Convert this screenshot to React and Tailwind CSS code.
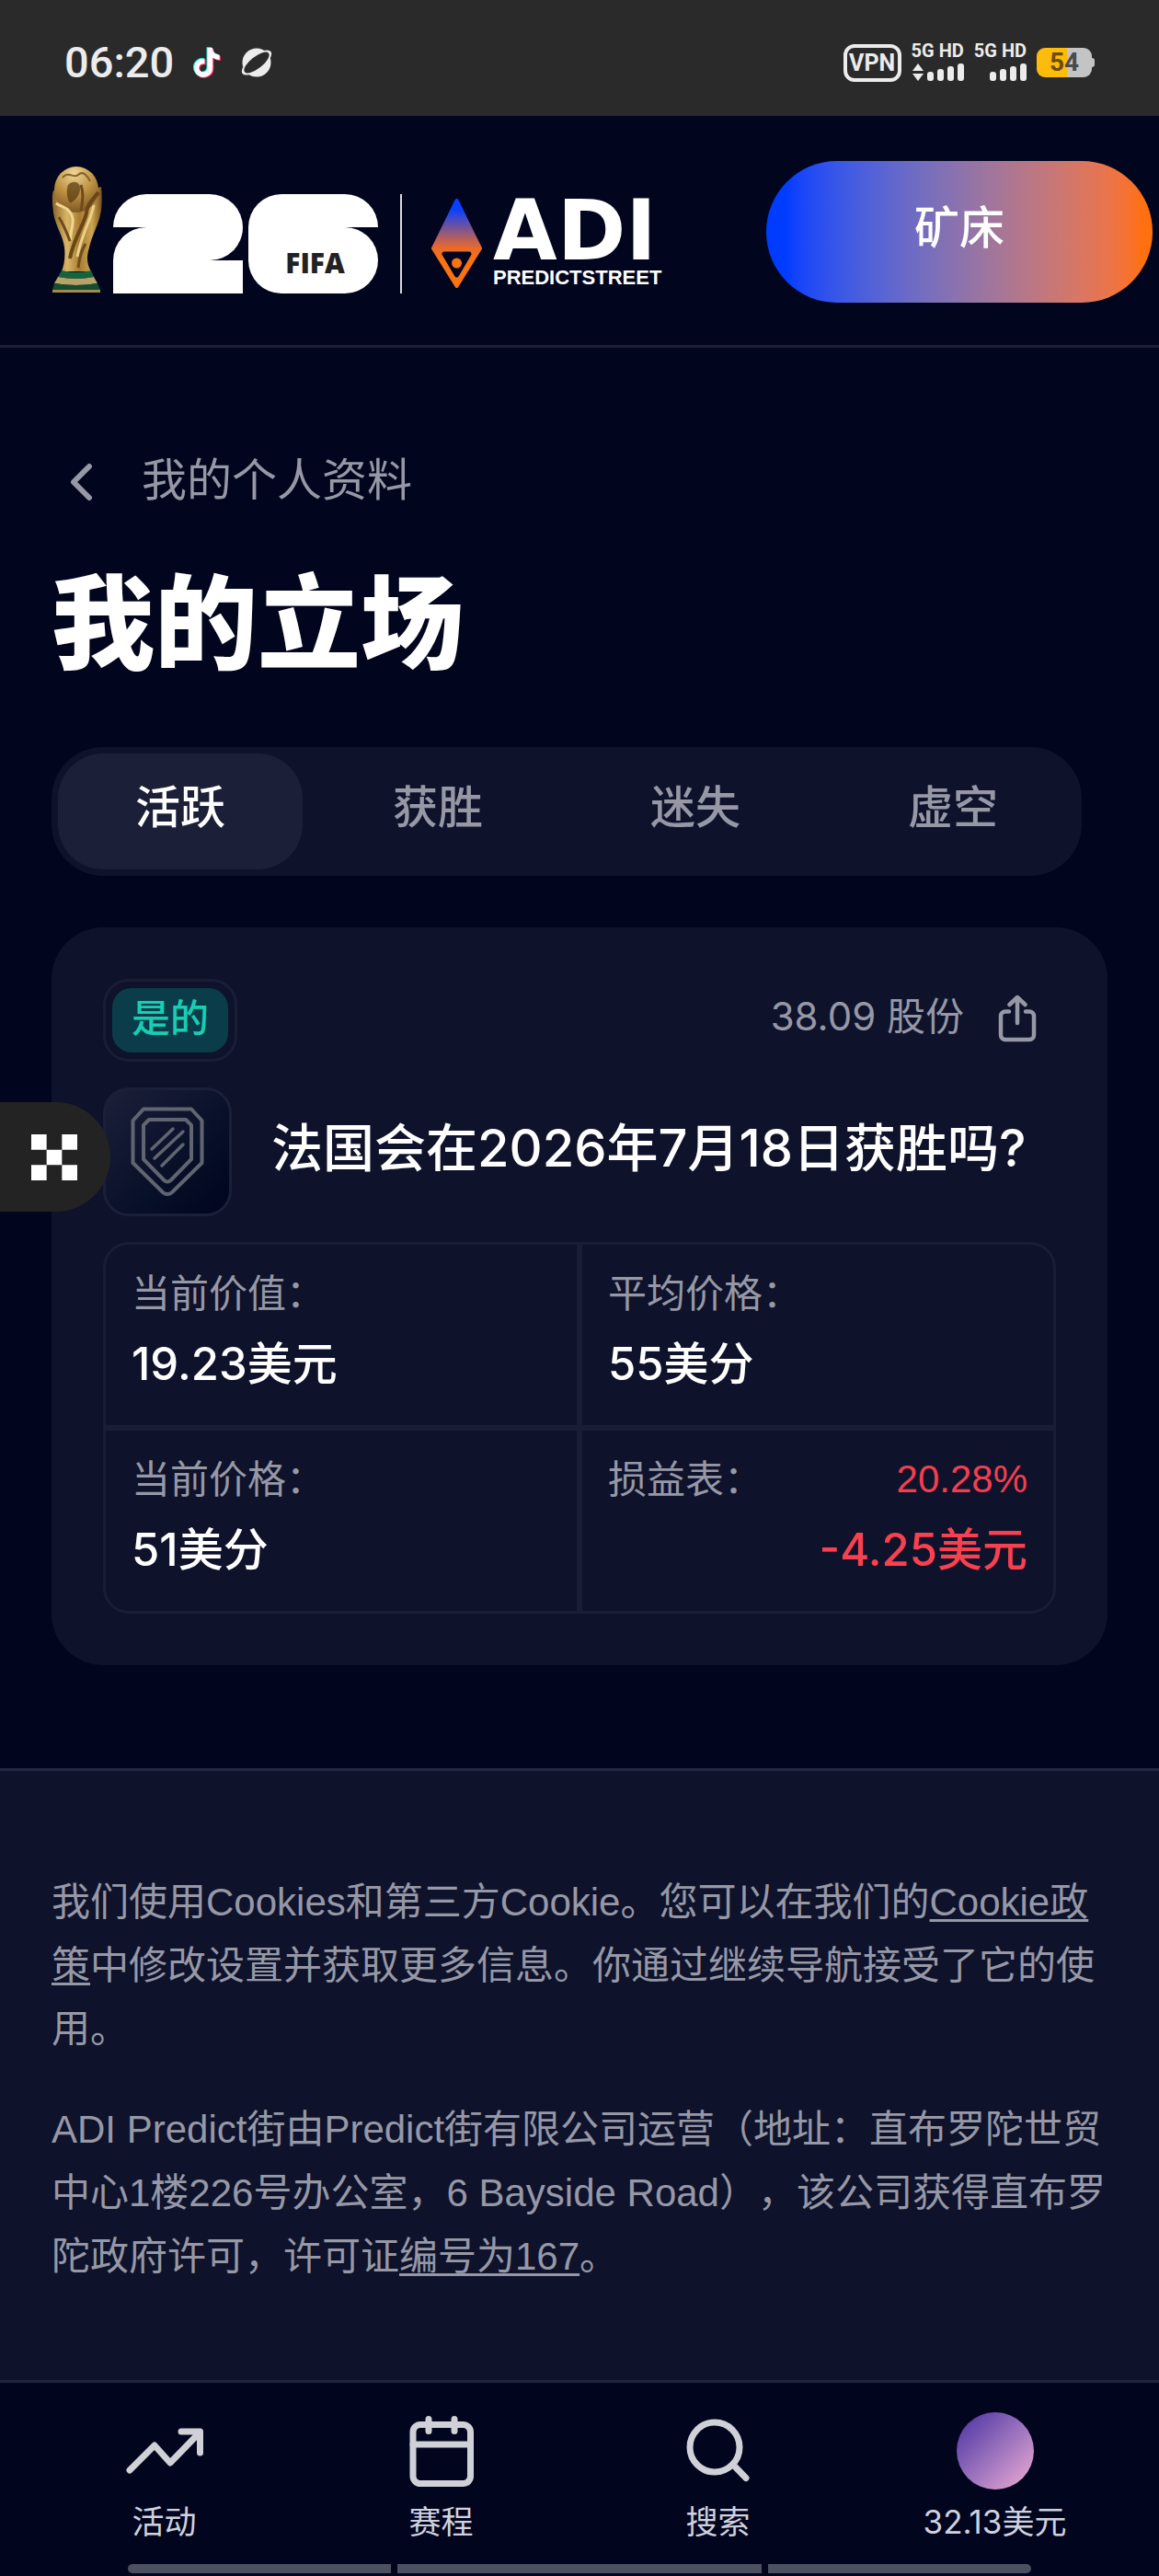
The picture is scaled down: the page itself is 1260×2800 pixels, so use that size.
import { useState } from "react";

const TABS = ["活跃", "获胜", "迷失", "虚空"];

const BAR_HEIGHTS = ["h-[10px]", "h-[13px]", "h-[16px]", "h-[19px]"];

// ---------- Icons ----------

function TiktokIcon() {
  const note = "M19.6 6.7a4.8 4.8 0 0 1-3.8-4.2V2h-3.4v13.7a2.9 2.9 0 1 1-2-2.8V9.4a6.3 6.3 0 1 0 5.5 6.3v-7a8.2 8.2 0 0 0 4.700 1.500V6.800a4.800 4.800 0 0 1-1-.1z";
  return (
    <svg viewBox="2 1 20 22" className="h-9 w-8" aria-hidden="true">
      <path d={note} fill="#25f4ee" transform="translate(-0.7 -0.5)" />
      <path d={note} fill="#fe2c55" transform="translate(0.7 0.6)" />
      <path d={note} fill="#ffffff" />
    </svg>
  );
}

function PlanetIcon() {
  return (
    <svg viewBox="0 0 36 34" className="h-[34px] w-9" aria-hidden="true">
      <circle cx="18" cy="17" r="15.5" fill="#ececec" />
      <ellipse cx="18" cy="17" rx="19.5" ry="8" transform="rotate(-38 18 17)" fill="#ececec" />
      <ellipse cx="18" cy="17" rx="16.5" ry="6.5" transform="rotate(-38 18 17)" fill="#2a2a2a" />
    </svg>
  );
}

function Trophy() {
  return (
    <svg viewBox="0 0 56 138" className="h-[138px] w-14" role="img" aria-label="Trophy">
      <defs>
        <linearGradient id="gold" x1="0" x2="1" y1="0" y2="0">
          <stop offset="0" stopColor="#8a6428" />
          <stop offset="0.3" stopColor="#d9b768" />
          <stop offset="0.55" stopColor="#a87c33" />
          <stop offset="0.8" stopColor="#cda553" />
          <stop offset="1" stopColor="#76501c" />
        </linearGradient>
        <radialGradient id="globe" cx="0.45" cy="0.15" r="0.9">
          <stop offset="0" stopColor="#efd795" />
          <stop offset="0.5" stopColor="#bd9244" />
          <stop offset="1" stopColor="#76501f" />
        </radialGradient>
      </defs>
      <path d="M2 26C0 32 1 40 2 50C4 64 12 74 14 88C15 98 14 106 11 114H43C38 106 38 98 41 88C44 74 52 62 54 48C55 38 55 30 54 22L46 24L10 28Z" fill="url(#gold)" />
      <ellipse cx="27" cy="25" rx="24" ry="25" fill="url(#globe)" />
      <path d="M12 12c7-8 12 2 17-3s10 1 13 7" fill="none" stroke="#8a6228" strokeWidth="2" />
      <path d="M18 20c6-6 13-3 13 4s-5 12-9 15-7-12-4-19z" fill="#54370f" opacity="0.7" />
      <path d="M5 40c6 4 13 4 17 13s-3 18-1 27" fill="none" stroke="#f0d68f" strokeWidth="3" />
      <path d="M51 28c-5 7-12 12-13 22s-14 28-18 50" fill="none" stroke="#6a4617" strokeWidth="4" />
      <path d="M46 42c-3 16-13 30-18 56" fill="none" stroke="#ecd08a" strokeWidth="3" />
      <path d="M8 55c5 8 8 15 12 26M32 20c3 9 2 17 0 28M37 84c-5 8-7 17-8 26" fill="none" stroke="#704a1a" strokeWidth="3" />
      <path d="M11 113Q27 117 43 113L46 120Q27 124 7 120Z" fill="#17633d" />
      <path d="M7 120Q27 124 46 120L50 127Q27 131 3 127Z" fill="#b9a16a" />
      <path d="M3 127Q27 131 50 127L53 134Q27 138 1 134Z" fill="#124f31" />
      <path d="M1 134H53V137H1Z" fill="#a8884a" />
    </svg>
  );
}

function AdiDiamond() {
  return (
    <svg viewBox="0 0 55 97" className="h-[97px] w-[55px]" aria-hidden="true">
      <defs>
        <linearGradient id="diamond" x1="0" x2="0" y1="0" y2="1">
          <stop offset="0.1" stopColor="#0a3fff" />
          <stop offset="0.55" stopColor="#e8692c" />
          <stop offset="0.7" stopColor="#fb7210" />
        </linearGradient>
      </defs>
      <path d="M27.5 2L53 54L27.5 95L2 54Z" fill="url(#diamond)" stroke="url(#diamond)" strokeWidth="4" strokeLinejoin="round" />
      <path d="M14 60H41L27.5 83Z" fill="#01051e" stroke="#01051e" strokeWidth="5" strokeLinejoin="round" />
      <circle cx="27.5" cy="70" r="5.5" fill="#fb7210" />
    </svg>
  );
}

function ShareIcon() {
  return (
    <svg viewBox="0 0 42 52" className="h-[52px] w-[42px]" fill="none" stroke="currentColor" strokeWidth="4.5" strokeLinecap="round" strokeLinejoin="round" aria-hidden="true">
      <path d="M12 18.5H8a5 5 0 0 0-5 5V44a5 5 0 0 0 5 5H34a5 5 0 0 0 5-5V23.5a5 5 0 0 0-5-5H30" />
      <path d="M21 31V3.5M12.5 11L21 3L29.5 11" />
    </svg>
  );
}

function ShieldIcon() {
  return (
    <svg viewBox="0 0 80 98" className="h-[98px] w-20" fill="none" stroke="#61656f" strokeWidth="4" strokeLinejoin="round" strokeLinecap="round" aria-hidden="true">
      <path d="M14 2.5H66L77.5 15V61L45 93Q40 97 35 93L2.5 61V15Z" />
      <path d="M20 14H60L66 20V57L43.5 80Q40 83 36.5 80L14 57V20Z" />
      <path d="M23 46L46 24M26 56L57 27M34 64L57 41" strokeWidth="3.5" />
    </svg>
  );
}

function NavSvg({ children }) {
  return (
    <svg viewBox="0 0 84 84" className="size-21" fill="none" stroke="#cfd1d6" strokeWidth="7" strokeLinecap="round" strokeLinejoin="round" aria-hidden="true">
      {children}
    </svg>
  );
}

// ---------- Status bar ----------

function Signal({ arrows }) {
  return (
    <div className="flex flex-col items-end gap-[6px]">
      <span className="text-[20px] leading-[15px] font-bold whitespace-nowrap">5G HD</span>
      <div className="flex h-[19px] items-end gap-[4px]">
        {arrows && (
          <svg viewBox="0 0 12 19" className="h-[19px] w-[12px]" fill="currentColor" aria-hidden="true">
            <path d="M6 0L12 8H0ZM6 19L0 11H12Z" />
          </svg>
        )}
        {BAR_HEIGHTS.map((h) => (
          <span key={h} className={`w-[7px] rounded-[3px] bg-[#ececec] ${h}`} />
        ))}
      </div>
    </div>
  );
}

function StatusBar() {
  return (
    <div className="flex h-[126px] items-center justify-between bg-[#2a2a2a] pt-[10px] pr-[70px] pl-[70px] font-[Roboto,sans-serif] text-[#ececec]">
      <div className="flex items-center gap-5">
        <span className="text-[47px] leading-[46px] font-medium">06:20</span>
        <TiktokIcon />
        <PlanetIcon />
      </div>
      <div className="flex items-center gap-[11px]">
        <span className="flex h-[41px] w-[63px] items-center justify-center rounded-[12px] border-4 border-[#ececec] text-[25px] leading-none font-bold">
          VPN
        </span>
        <Signal arrows />
        <Signal />
        <div className="flex items-center">
          <span className="flex h-8 w-[60px] items-center justify-center rounded-[9px] bg-linear-to-r from-[#fdbb0b] from-55% to-[#c4c4c4] to-55% text-[28px] leading-none font-bold">
            <span className="text-[#6d4a06]">5</span>
            <span className="text-[#4b4b4b]">4</span>
          </span>
          <span className="h-[10px] w-[3px] rounded-r-sm bg-[#c4c4c4]" />
        </div>
      </div>
    </div>
  );
}

// ---------- Header ----------

function Emblem26() {
  return (
    <div className="flex gap-[6px]">
      <div className="w-[141px]">
        <div className="h-9 rounded-t-[36px] bg-white" />
        <div className="h-9 rounded-tl-[36px] rounded-br-[36px] bg-white" />
        <div className="h-9 bg-white" />
      </div>
      <div className="w-[141px]">
        <div className="h-9 rounded-t-[36px] bg-white" />
        <div className="flex h-18 items-center justify-center rounded-tr-[36px] rounded-b-[36px] bg-white pt-1 pl-1 font-['Open_Sans',sans-serif] text-[30px] font-extrabold text-[#222222]">
          FIFA
        </div>
      </div>
    </div>
  );
}

function Header() {
  return (
    <header className="flex items-start justify-between border-b-3 border-[#1b2039] pt-[49px] pr-[7px] pb-[46px] pl-14">
      <a href="#home" className="mt-[6px] flex items-end">
        <Trophy />
        <div className="ml-[11px]">
          <Emblem26 />
        </div>
        <span className="ml-6 h-27 w-[2px] bg-[#d8d9de]" />
        <span className="ml-8 flex items-center gap-3 pb-[6px]">
          <AdiDiamond />
          <span className="flex flex-col gap-3">
            <span className="font-['DejaVu_Sans',sans-serif] text-[90px] leading-[62px] font-bold">ADI</span>
            <span className="font-['Liberation_Sans',sans-serif] text-[22px] leading-4 font-bold">PREDICTSTREET</span>
          </span>
        </span>
      </a>
      <button className="h-[154px] w-[420px] rounded-full bg-linear-to-r from-[#003cff] from-5% to-[#ff7010] to-97% pb-2 text-[49px] leading-[56px] font-medium">
        矿床
      </button>
    </header>
  );
}

// ---------- Position card ----------

function Stat({ label, value, change, corner }) {
  return (
    <div className={`border-3 border-[#191d36] px-7 pt-7 pb-[38px] ${corner}`}>
      <dt className="flex justify-between text-[42px] leading-[50px] text-[#9698a6]">
        {label}
        {change && <span className="font-['Liberation_Sans',sans-serif] text-[#f23f50]">{change}</span>}
      </dt>
      <dd className={`mt-6 text-[49px] leading-[56px] font-medium ${change ? "text-right text-[#f8404f]" : ""}`}>{value}</dd>
    </div>
  );
}

function PositionCard() {
  return (
    <article className="mt-14 rounded-[56px] bg-[#0e122b] p-14">
      <div className="flex items-center justify-between">
        <span className="rounded-[28px] border-3 border-[#191d36] p-[7px]">
          <span className="block h-[70px] rounded-[21px] bg-[#0b3c49] px-[21px] text-[42px] leading-[66px] font-medium text-[#17cdb3]">
            是的
          </span>
        </span>
        <div className="flex items-center gap-4 pb-1 text-[#9698a6]">
          <span className="pb-1 text-[42px] leading-[50px]">38.09 股份</span>
          <button aria-label="分享" className="flex w-21 justify-center">
            <ShareIcon />
          </button>
        </div>
      </div>

      <div className="relative mt-7 flex items-center gap-[43px]">
        {/* Floating side handle */}
        <button
          aria-label="菜单"
          className="absolute top-4 -left-28 z-10 flex h-[119px] w-30 items-center justify-center rounded-r-full bg-[#232323] pr-[2px]"
        >
          <svg viewBox="0 0 3 3" className="size-[50px]" fill="#ffffff" aria-hidden="true">
            <path d="M0 0h1v1H0zM2 0h1v1H2zM1 1h1v1H1zM0 2h1v1H0zM2 2h1v1H2z" />
          </svg>
        </button>
        <span className="flex size-35 shrink-0 items-center justify-center rounded-[28px] border-3 border-[#1b1f38] bg-linear-to-br from-[#1c2039] to-[#01051e]">
          <ShieldIcon />
        </span>
        <h2 className="pb-2 text-[56px] leading-[70px] font-medium">法国会在2026年7月18日获胜吗?</h2>
      </div>

      <dl className="mt-7 grid grid-cols-2">
        <Stat label="当前价值：" value="19.23美元" corner="rounded-tl-[28px]" />
        <Stat label="平均价格：" value="55美分" corner="rounded-tr-[28px]" />
        <Stat label="当前价格：" value="51美分" corner="rounded-bl-[28px]" />
        <Stat label="损益表：" value="-4.25美元" change="20.28%" corner="rounded-br-[28px]" />
      </dl>
    </article>
  );
}

// ---------- Footer + bottom navigation ----------

function Footer() {
  return (
    <footer className="mt-28 grow space-y-10 border-t-3 border-[#242943] bg-[#0e122b] px-14 pt-27 pb-24 font-['Liberation_Sans','Noto_Sans_CJK_SC',sans-serif] text-[42px] leading-[69px] text-[#9698a6] [text-spacing-trim:space-all]">
      <p>
        我们使用Cookies和第三方Cookie。您可以在我们的
        <a href="#cookies" className="underline decoration-3 underline-offset-4">Cookie政策</a>
        中修改设置并获取更多信息。你通过继续导航接受了它的使用。
      </p>
      <p>
        ADI Predict街由Predict街有限公司运营（地址：直布罗陀世贸中心1楼226号办公室，6 Bayside Road），该公司获得直布罗陀政府许可，许可证
        <a href="#license" className="underline decoration-3 underline-offset-4">编号为167</a>。
      </p>
    </footer>
  );
}

function NavItem({ href, label, children }) {
  return (
    <a href={href} className="flex flex-1 flex-col items-center gap-[14px] text-[35px] leading-[42px] text-[#cfd1de]">
      {children}
      <span>{label}</span>
    </a>
  );
}

function BottomNav() {
  return (
    <nav className="sticky bottom-0 border-t-3 border-[#20243d] bg-[#01051e] pt-8 pb-[3px]">
      <div className="flex px-7">
        <NavItem href="#events" label="活动">
          <NavSvg>
            <path d="M4 63L31 36L48 55L80 22M60 21H80.5V44" />
          </NavSvg>
        </NavItem>
        <NavItem href="#schedule" label="赛程">
          <NavSvg>
            <rect x="11" y="13.5" width="62.5" height="64" rx="8" />
            <path d="M28 7.5V20.5M56 7.5V20.5M11 35H73" />
          </NavSvg>
        </NavItem>
        <NavItem href="#search" label="搜索">
          <NavSvg>
            <circle cx="38" cy="38" r="27" />
            <path d="M58.5 57.5L72 71.5" />
          </NavSvg>
        </NavItem>
        <NavItem href="#profile" label="32.13美元">
          <span className="size-21 rounded-full bg-linear-to-br from-[#4c2ba0] to-[#f3aed2]" />
        </NavItem>
      </div>
      {/* System gesture bar */}
      <div className="mt-[25px] flex h-[10px] gap-[7px] px-[139px]">
        <span className="w-[286px] rounded-l-full bg-[#4c5060]" />
        <span className="grow bg-[#4c5060]" />
        <span className="w-[286px] rounded-r-full bg-[#4c5060]" />
      </div>
    </nav>
  );
}

function App() {
  const [activeTab, setActiveTab] = useState("活跃");

  return (
    <div lang="zh-CN" className="flex min-h-screen flex-col bg-[#01051e] font-[Inter,'Noto_Sans_CJK_SC',sans-serif] text-white">
      <StatusBar />
      <Header />

      <main className="px-14 pt-29">
        <a href="#profile" className="flex items-center text-[49px] leading-[56px] text-[#9698a6]">
          <svg viewBox="0 0 64 56" className="h-14 w-16" fill="none" stroke="currentColor" strokeWidth="6" strokeLinecap="round" strokeLinejoin="round" aria-hidden="true">
            <path d="M41 11L24 28L41 45" />
          </svg>
          <span className="ml-[34px] pb-1">我的个人资料</span>
        </a>
        <h1 className="mt-[54px] text-[112px] leading-[140px] font-extrabold">我的立场</h1>

        {/* Tabs */}
        <div role="tablist" className="mt-16 mr-7 flex h-35 gap-[14px] rounded-[56px] bg-[#0e122b] p-[7px]">
          {TABS.map((tab) => (
            <button
              key={tab}
              role="tab"
              aria-selected={activeTab === tab}
              onClick={() => setActiveTab(tab)}
              className={`flex-1 rounded-[49px] pb-2 text-[49px] leading-[56px] font-medium ${
                activeTab === tab ? "bg-[#1b1f38] text-white" : "text-[#9698a6]"
              }`}
            >
              {tab}
            </button>
          ))}
        </div>

        <PositionCard />
      </main>

      <Footer />
      <BottomNav />
    </div>
  );
}

export default App;
